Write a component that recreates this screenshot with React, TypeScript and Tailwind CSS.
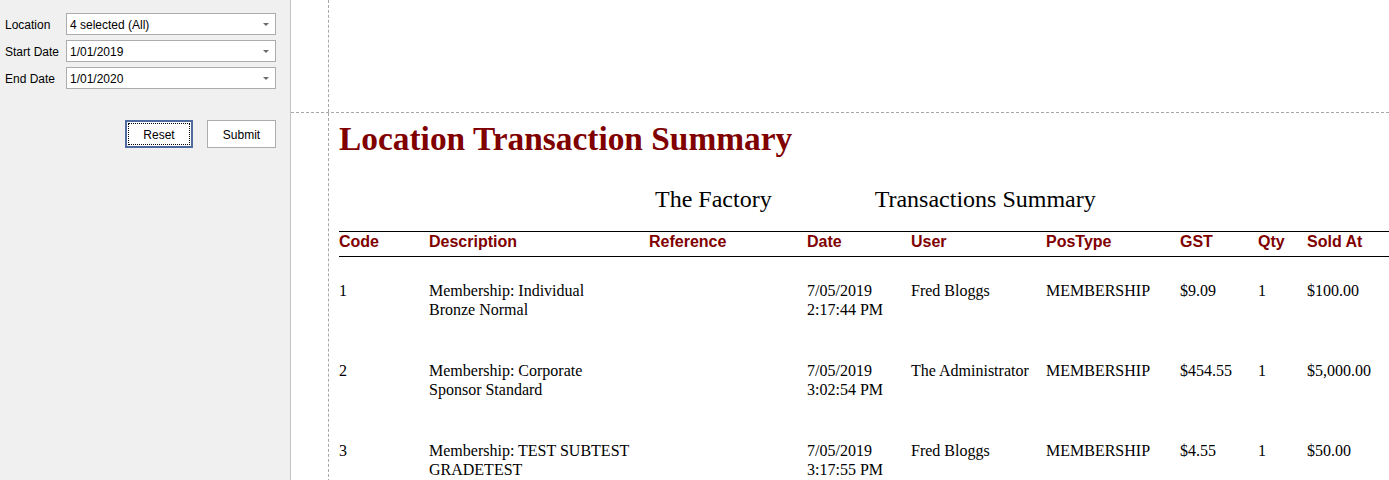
import React from 'react';

const columns = [
  { key: 'code', label: 'Code', width: 'w-[90px]' },
  { key: 'description', label: 'Description', width: 'w-[220px]' },
  { key: 'reference', label: 'Reference', width: 'w-[158px]' },
  { key: 'date', label: 'Date', width: 'w-[104px]' },
  { key: 'user', label: 'User', width: 'w-[135px]' },
  { key: 'posType', label: 'PosType', width: 'w-[134px]' },
  { key: 'gst', label: 'GST', width: 'w-[78px]' },
  { key: 'qty', label: 'Qty', width: 'w-[49px]' },
  { key: 'soldAt', label: 'Sold At', width: 'w-[110px]' },
] as const;

type RowType = Record<(typeof columns)[number]['key'], string[]>;

const rows: RowType[] = [
  {
    code: ['1'],
    description: ['Membership: Individual', 'Bronze Normal'],
    reference: [],
    date: ['7/05/2019', '2:17:44 PM'],
    user: ['Fred Bloggs'],
    posType: ['MEMBERSHIP'],
    gst: ['$9.09'],
    qty: ['1'],
    soldAt: ['$100.00'],
  },
  {
    code: ['2'],
    description: ['Membership: Corporate', 'Sponsor Standard'],
    reference: [],
    date: ['7/05/2019', '3:02:54 PM'],
    user: ['The Administrator'],
    posType: ['MEMBERSHIP'],
    gst: ['$454.55'],
    qty: ['1'],
    soldAt: ['$5,000.00'],
  },
  {
    code: ['3'],
    description: ['Membership: TEST SUBTEST', 'GRADETEST'],
    reference: [],
    date: ['7/05/2019', '3:17:55 PM'],
    user: ['Fred Bloggs'],
    posType: ['MEMBERSHIP'],
    gst: ['$4.55'],
    qty: ['1'],
    soldAt: ['$50.00'],
  },
];

function SelectBox({ value }: { value: string }) {
  return (
    <div className="flex h-[22px] w-[210px] items-center justify-between border border-[#acacac] bg-white pl-[3px] pr-[6px]">
      <span className="pt-px leading-[20px]">{value}</span>
      <span className="h-0 w-0 border-x-[3px] border-t-[3px] border-x-transparent border-t-[#6b6b6b]" />
    </div>
  );
}

function FilterPanel() {
  const fields = [
    { label: 'Location', value: '4 selected (All)' },
    { label: 'Start Date', value: '1/01/2019' },
    { label: 'End Date', value: '1/01/2020' },
  ];

  return (
    <div className="h-[480px] w-[291px] shrink-0 border-r border-[#c4c4c4] bg-[#f0f0f0] pt-[13px] text-[12px] text-black [font-family:'Liberation_Sans',Arial,sans-serif]">
      <div className="flex flex-col gap-[5px]">
        {fields.map((field) => (
          <div key={field.label} className="flex items-center">
            <div className="w-[66px] pl-[5px] pt-px">{field.label}</div>
            <SelectBox value={field.value} />
          </div>
        ))}
      </div>
      <div className="mt-[31px] flex w-[276px] justify-end gap-[14px]">
        <button className="h-[28px] w-[68px] border-2 border-[#4f6a9c] bg-white p-[1px]">
          <div className="flex h-full w-full items-center justify-center border border-dotted border-black pt-px">
            Reset
          </div>
        </button>
        <button className="h-[28px] w-[69px] border border-[#adadad] bg-white pt-px">
          Submit
        </button>
      </div>
    </div>
  );
}

function ReportTable() {
  return (
    <div className="mt-[18px] w-[1100px]">
      <div className="flex h-[26px] border-y border-black text-[16px] font-bold leading-[20px] text-[#800000] [font-family:'Liberation_Sans',Arial,sans-serif]">
        {columns.map((col) => (
          <div key={col.key} className={`${col.width} shrink-0`}>
            {col.label}
          </div>
        ))}
      </div>
      {rows.map((row, i) => (
        <div
          key={i}
          className="flex h-[80px] pt-[24px] text-[16px] leading-[19px] text-black [font-family:'Liberation_Serif','Times_New_Roman',serif]"
        >
          {columns.map((col) => (
            <div key={col.key} className={`${col.width} shrink-0`}>
              {row[col.key].map((line) => (
                <div key={line} className="whitespace-nowrap">
                  {line}
                </div>
              ))}
            </div>
          ))}
        </div>
      ))}
    </div>
  );
}

export default function App() {
  return (
    <div className="flex h-[480px] w-[1389px] overflow-hidden bg-white">
      <FilterPanel />
      <div className="flex min-w-0 flex-1 flex-col">
        {/* page margin */}
        <div className="flex h-[113px] shrink-0 border-b border-dashed border-[#a8a8a8]">
          <div className="w-[37px] shrink-0" />
          <div className="flex-1 border-l border-dashed border-[#a8a8a8]" />
        </div>
        <div className="flex flex-1">
          <div className="w-[37px] shrink-0" />
          <div className="flex-1 border-l border-dashed border-[#a8a8a8] pl-[10px] pt-[6px]">
            <div className="whitespace-nowrap text-[33.4px] font-bold leading-[40px] text-[#800000] [font-family:'Liberation_Serif','Times_New_Roman',serif]">
              Location Transaction Summary
            </div>
            <div className="mt-[26px] flex whitespace-nowrap text-[24px] leading-[28px] text-black [font-family:'Liberation_Serif','Times_New_Roman',serif]">
              <div className="ml-[316px]">The Factory</div>
              <div className="ml-[103px]">Transactions Summary</div>
            </div>
            <ReportTable />
          </div>
        </div>
      </div>
    </div>
  );
}
